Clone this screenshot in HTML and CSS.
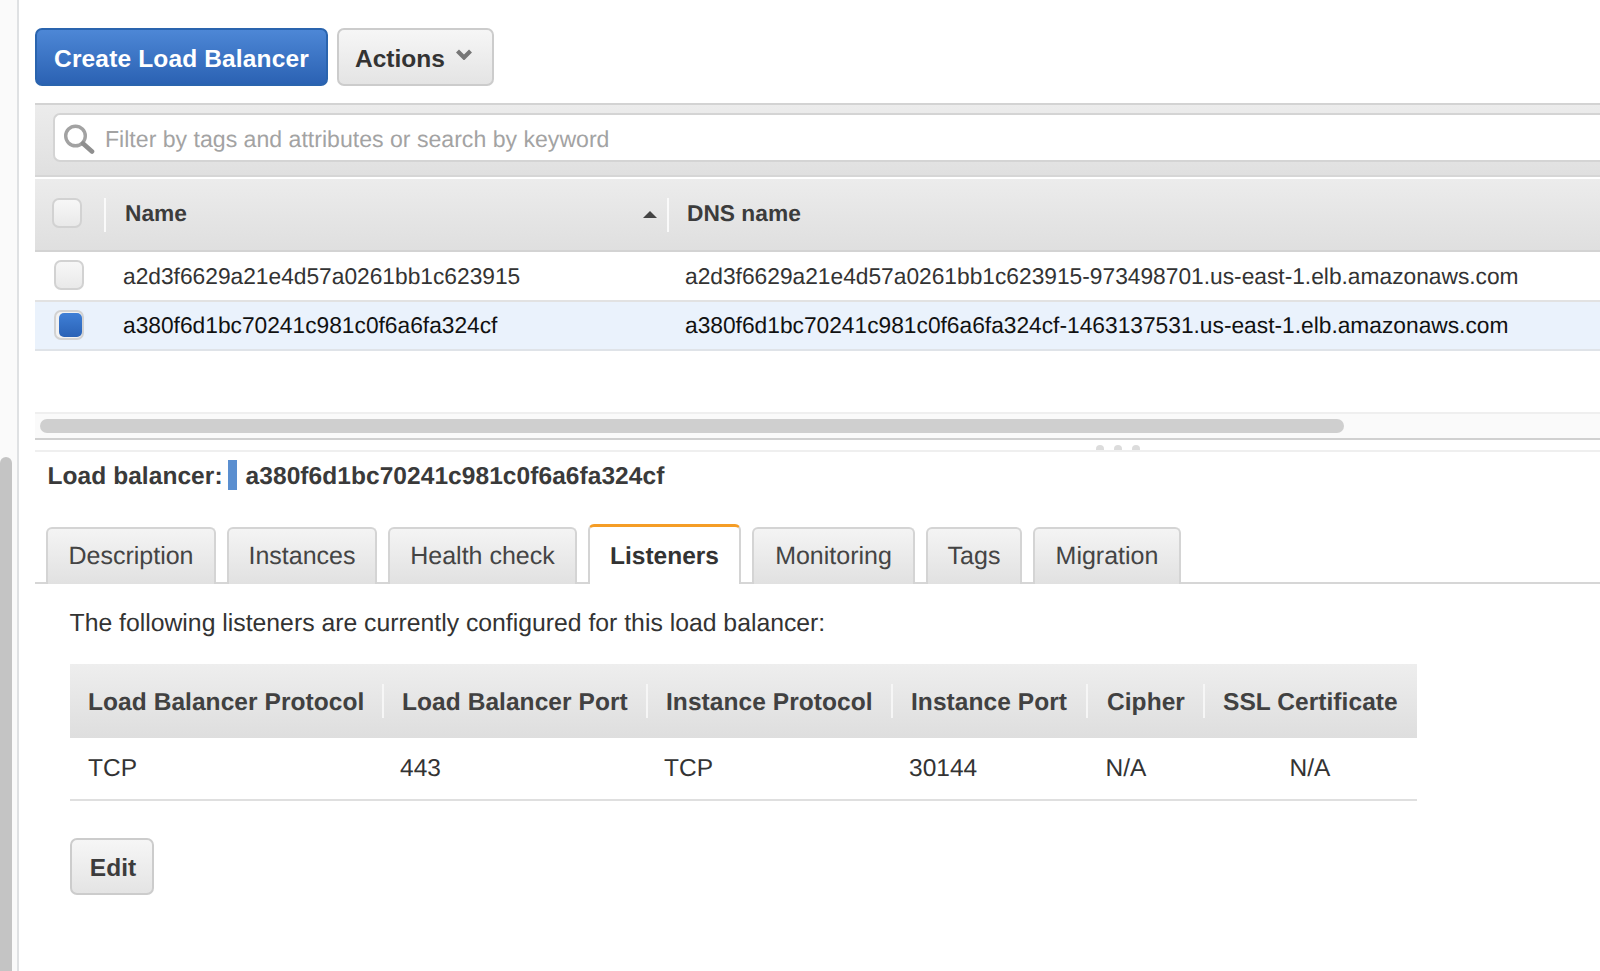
FILE: index.html
```html
<!DOCTYPE html>
<html lang="en">
<head>
<meta charset="utf-8">
<title>Load Balancers</title>
<link rel="stylesheet" href="styles.css">
</head>
<body>
<aside class="rail"><div class="rail-thumb"></div></aside>
<main class="main">
  <div class="toolbar">
    <button class="btn btn-primary">Create Load Balancer</button>
    <button class="btn btn-actions">Actions
      <svg class="chevron" viewBox="0 0 16 11" width="16" height="11"><path d="M1.5 2 L8 8.5 L14.5 2" fill="none" stroke="#777" stroke-width="4.2"/></svg>
    </button>
  </div>
  <div class="filterbar">
    <div class="search">
      <svg class="search-icon" viewBox="0 0 32 30" width="32" height="30"><circle cx="12.5" cy="12" r="9.8" fill="#fff" stroke="#a2a2a2" stroke-width="3.4"/><path d="M20 19.5 L29 27.5" stroke="#8f8f8f" stroke-width="4.6" stroke-linecap="round"/></svg>
      <span class="placeholder">Filter by tags and attributes or search by keyword</span>
    </div>
  </div>
  <div class="lb-head">
    <div class="cell-check"><span class="check"></span></div>
    <div class="lb-name head-name">Name<span class="sort"></span></div>
    <div class="lb-dns head-dns">DNS name</div>
  </div>
  <div class="lb-row">
    <div class="cell-check"><span class="check"></span></div>
    <div class="lb-name">a2d3f6629a21e4d57a0261bb1c623915</div>
    <div class="lb-dns">a2d3f6629a21e4d57a0261bb1c623915-973498701.us-east-1.elb.amazonaws.com</div>
  </div>
  <div class="lb-row lb-row-selected">
    <div class="cell-check"><span class="check check-on"><span class="check-fill"></span></span></div>
    <div class="lb-name">a380f6d1bc70241c981c0f6a6fa324cf</div>
    <div class="lb-dns">a380f6d1bc70241c981c0f6a6fa324cf-1463137531.us-east-1.elb.amazonaws.com</div>
  </div>
  <div class="hscroll"><div class="hscroll-thumb"></div></div>
  <div class="sash"><i></i><i></i><i></i></div>
  <h2 class="detail-title">Load balancer:<span class="swatch"></span>a380f6d1bc70241c981c0f6a6fa324cf</h2>
  <nav class="tabs">
    <a class="tab tab-description">Description</a>
    <a class="tab tab-instances">Instances</a>
    <a class="tab tab-health">Health check</a>
    <a class="tab tab-active">Listeners</a>
    <a class="tab tab-monitoring">Monitoring</a>
    <a class="tab tab-tags">Tags</a>
    <a class="tab tab-migration">Migration</a>
  </nav>
  <section class="panel">
    <p class="intro">The following listeners are currently configured for this load balancer:</p>
    <div class="ltable">
      <div class="lhead"><span>Load Balancer Protocol</span></div>
      <div class="lhead"><span>Load Balancer Port</span></div>
      <div class="lhead"><span>Instance Protocol</span></div>
      <div class="lhead"><span>Instance Port</span></div>
      <div class="lhead lhead-cipher"><span>Cipher</span></div>
      <div class="lhead"><span>SSL Certificate</span></div>
      <div class="lcell">TCP</div>
      <div class="lcell">443</div>
      <div class="lcell">TCP</div>
      <div class="lcell">30144</div>
      <div class="lcell lcell-cipher">N/A</div>
      <div class="lcell lcell-center">N/A</div>
    </div>
    <button class="btn btn-edit">Edit</button>
  </section>
</main>
</body>
</html>
```
FILE: styles.css
```css
* { box-sizing: border-box; }
html, body { margin: 0; height: 971px; overflow: hidden; background: #fff; }
body { display: flex; font-family: "Liberation Sans", Arial, sans-serif; color: #333; text-rendering: geometricPrecision; }

.rail { width: 19px; flex: none; height: 971px; background: #fafafa; border-right: 2px solid #dfe1e3; padding-top: 457px; }
.rail-thumb { width: 12px; height: 514px; background: #c4c4c4; border-radius: 6px 6px 0 0; }

.main { flex: 1; min-width: 0; padding-left: 16px; overflow: hidden; }

.btn { font-family: inherit; font-weight: 700; font-size: 24.5px; border-radius: 7px; cursor: pointer; padding: 3px 0 0; color: #333; border: 2px solid #ccc; background: linear-gradient(#f6f6f6, #e4e4e4); }

.toolbar { display: flex; gap: 9px; margin-top: 28px; height: 58px; }
.btn-primary { width: 293px; letter-spacing: .15px; color: #fff; border-color: #2a64ae; background: linear-gradient(#4d87d6, #2b62b3); }
.btn-actions { width: 157px; display: flex; align-items: center; justify-content: flex-start; padding-left: 16px; gap: 11px; }
.chevron { margin-top: -9px; }

.filterbar { margin-top: 17px; height: 74px; padding: 8px 0 0 18px; background: linear-gradient(#ececec, #e0e0e0); border-top: 2px solid #d3d3d3; border-bottom: 2px solid #d6d6d6; }
.search { height: 49px; background: #fff; border: 2px solid #d4d4d4; border-right: 0; border-radius: 7px 0 0 7px; display: flex; align-items: center; padding-left: 8px; }
.search-icon { flex: none; margin-top: 2px; }
.placeholder { margin-left: 10px; margin-top: 4px; font-size: 23.1px; color: #a3a3a3; }

.lb-head, .lb-row { display: flex; align-items: center; font-size: 22.75px; }
.lb-head { height: 73px; margin-top: 2px; background: linear-gradient(#ececec, #dfdfdf); border-bottom: 2px solid #d3d3d3; font-weight: 700; color: #3c3c3c; }
.lb-row { height: 50px; color: #333; border-bottom: 2px solid #e2e2e2; }
.lb-row-selected { height: 49px; color: #111; background: #eaf2fc; border-bottom-color: #dfe3e8; }

.cell-check { width: 70px; flex: none; padding-left: 17px; display: flex; align-items: center; }
.lb-head .check { margin-bottom: 4px; }
.lb-row .cell-check { padding-left: 19px; }
.lb-row .check { margin-top: -2px; }
.check { width: 30px; height: 30px; border: 2px solid #d2d2d2; border-radius: 7px; background: linear-gradient(#f7f7f7, #e9e9e9); display: flex; align-items: center; justify-content: center; }
.check-on { background: #f2f2f2; }
.check-fill { width: 23px; height: 24px; border-radius: 5px; background: linear-gradient(#3f7fd6, #2a62b6); margin-left: 2px; margin-top: 1px; flex: none; }

.lb-name { width: 562px; flex: none; padding-left: 18px; position: relative; }
.lb-dns { flex: 1; white-space: nowrap; padding-left: 18px; }
.head-name { height: 34px; line-height: 30px; width: 563px; margin-left: -1px; padding-left: 19px; border-left: 2px solid #fafafa; }
.head-dns { height: 34px; line-height: 30px; border-left: 2px solid #fafafa; }
.sort { position: absolute; right: 10px; top: 13px; width: 0; height: 0; border-left: 7px solid transparent; border-right: 7px solid transparent; border-bottom: 7px solid #444; }

.hscroll { margin-top: 61px; height: 26px; background: #fafafa; border-top: 2px solid #efefef; padding: 5px 0 0 5px; }
.hscroll-thumb { width: 1304px; height: 14px; border-radius: 7px; background: #cfcfcf; }
.sash { height: 14px; border-top: 2px solid #d0d0d0; border-bottom: 2px solid #efefef; display: flex; gap: 10px; padding: 5px 0 0 1061px; overflow: hidden; }
.sash i { display: block; width: 8px; height: 8px; border-radius: 50%; background: #dcdcdc; flex: none; }

.detail-title { margin: 7px 0 0; padding: 3px 0 0 12.5px; height: 32px; line-height: 32px; font-size: 24.5px; letter-spacing: .06px; font-weight: 700; color: #3a3a3a; display: flex; align-items: center; }
.swatch { width: 9px; height: 30px; margin: -3px 9px 0 5px; background: #5b8fd0; flex: none; }

.tabs { margin-top: 33px; height: 60px; display: flex; align-items: flex-end; padding-left: 11px; gap: 11px; border-bottom: 2px solid #d6d6d6; }
.tab { display: flex; align-items: center; justify-content: center; height: 57px; margin-bottom: -2px; font-size: 25px; color: #444; background: linear-gradient(#f4f4f4, #e1e1e1); border: 2px solid #d4d4d4; border-bottom: 0; border-radius: 6px 6px 0 0; }
.tab-description { width: 170px; }
.tab-instances { width: 150px; }
.tab-health { width: 189px; }
.tab-active { width: 153px; height: 60px; padding-top: 3px; font-size: 24.5px; font-weight: 700; color: #333; background: #fff; border-top: 3px solid #f59d26; }
.tab-monitoring { width: 163px; }
.tab-tags { width: 96px; }
.tab-migration { width: 148px; }

.panel { padding-left: 35px; }
.intro { margin: 26px 0 0 -0.5px; height: 28px; line-height: 28px; font-size: 24.77px; color: #333; white-space: nowrap; }

.ltable { display: grid; grid-template-columns: 312px 264px 245px 195px 117px 214px; width: 1347px; margin-top: 26px; font-size: 24.5px; }
.lhead { height: 74px; background: linear-gradient(#eeeeee, #dedede); display: flex; align-items: center; font-weight: 700; letter-spacing: .06px; color: #414141; white-space: nowrap; }
.lhead span { display: block; height: 34px; line-height: 38px; padding-left: 18px; border-left: 2px solid #f6f6f6; }
.lhead:first-child span { border-left: 0; }
.lhead-cipher span { padding-left: 19px; }
.lcell { height: 63px; line-height: 61px; padding-left: 18px; color: #333; border-bottom: 2px solid #dfdfdf; }
.lcell-cipher { padding-left: 19.5px; }
.lcell-center { padding-left: 0; text-align: center; }

.btn-edit { display: block; width: 84px; height: 57px; margin-top: 37px; padding-left: 2px; color: #3c3c3c; }
```
